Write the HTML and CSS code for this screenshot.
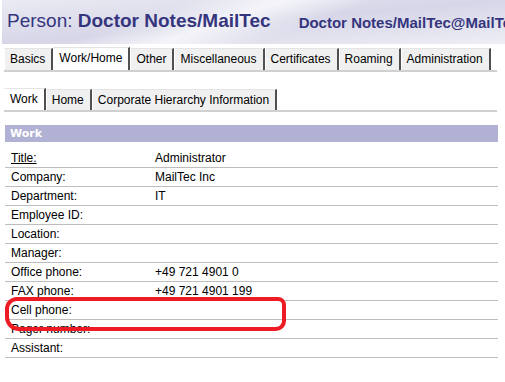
FILE: index.html
```
<!DOCTYPE html>
<html>
<head>
    <title>Person</title>
    <meta charset="utf-8" />
    <link rel="stylesheet" href="styles.css">
</head>
<body>
    <div class="header">
        <span class="title">Person: <b>Doctor Notes/MailTec</b></span>
        <span class="subtitle">Doctor Notes/MailTec@MailTec</span>
    </div>

    <div class="tabs main">
        <span class="tab">Basics</span>
        <span class="tab active">Work/Home</span>
        <span class="tab">Other</span>
        <span class="tab">Miscellaneous</span>
        <span class="tab">Certificates</span>
        <span class="tab">Roaming</span>
        <span class="tab">Administration</span>
    </div>

    <div class="tabs sub">
        <span class="tab active">Work</span>
        <span class="tab">Home</span>
        <span class="tab">Corporate Hierarchy Information</span>
    </div>

    <div class="section">
        <div class="section-head">Work</div>
        <table class="fields">
            <tr><td class="lbl"><u>Title:</u></td><td>Administrator</td></tr>
            <tr><td class="lbl">Company:</td><td>MailTec Inc</td></tr>
            <tr><td class="lbl">Department:</td><td>IT</td></tr>
            <tr><td class="lbl">Employee ID:</td><td></td></tr>
            <tr><td class="lbl">Location:</td><td></td></tr>
            <tr><td class="lbl">Manager:</td><td></td></tr>
            <tr><td class="lbl">Office phone:</td><td>+49 721 4901 0</td></tr>
            <tr><td class="lbl">FAX phone:</td><td>+49 721 4901 199</td></tr>
            <tr><td class="lbl">Cell phone:</td><td></td></tr>
            <tr><td class="lbl">Pager number:</td><td></td></tr>
            <tr><td class="lbl">Assistant:</td><td></td></tr>
        </table>
        <div class="mark"></div>
    </div>
</body>
</html>
```

FILE: styles.css
```
html, body {
    margin: 0;
    padding: 0;
}

body {
    font-family: "Liberation Sans", Arial, sans-serif;
    font-size: 12px;
    color: #000;
    background: #fff;
    width: 505px;
    overflow: hidden;
}

.header {
    margin-left: 2px;
    height: 44px;
    display: flex;
    align-items: center;
    white-space: nowrap;
    overflow: hidden;
    color: #35357d;
    background:
        linear-gradient(160deg, rgba(255,255,255,0) 30%, rgba(255,255,255,0.7) 45%, rgba(255,255,255,0) 60%),
        linear-gradient(175deg, rgba(255,255,255,0.5) 0%, rgba(255,255,255,0) 50%, rgba(255,255,255,0.6) 100%),
        #d6d6e8;
}

.title {
    font-size: 19px;
    padding-left: 5px;
    padding-bottom: 2px;
}

.subtitle {
    font-size: 15px;
    font-weight: bold;
    margin-left: 28px;
    padding-top: 1px;
}

.tabs {
    display: flex;
    align-items: flex-end;
    margin-left: 4px;
    width: 493px;
    border-bottom: 2px solid #d0d0d0;
}

.tabs.main {
    margin-top: 3px;
}

.tabs.sub {
    margin-top: 16px;
}

.tab {
    height: 21px;
    line-height: 21px;
    padding: 0 6px 0 5px;
    background: #f0f0f0;
    border-left: 1px solid #fff;
    border-right: 2px solid #505050;
    border-top: 1px solid #e4e4e4;
    white-space: nowrap;
}

.tab.active {
    background: #fff;
    height: 22px;
}

.sub .tab {
    height: 20px;
    line-height: 20px;
}

.sub .tab.active {
    height: 21px;
}

.section {
    position: relative;
    margin: 13px 0 0 5px;
    width: 493px;
}

.section-head {
    height: 17px;
    line-height: 17px;
    background: #b1b2d3;
    color: #fff;
    font-weight: bold;
    font-size: 11px;
    font-family: "DejaVu Sans", sans-serif;
    padding-left: 5px;
}

.fields {
    width: 100%;
    border-collapse: collapse;
    margin-top: 7px;
}

.fields td {
    height: 18px;
    padding: 0 0 0 6px;
    border-bottom: 1px solid #bebebe;
    vertical-align: middle;
}

.fields td.lbl {
    width: 138px;
}

.mark {
    position: absolute;
    left: 0;
    top: 172px;
    width: 273px;
    height: 26px;
    border: 4px solid #ed1c24;
    border-radius: 12px 8px 10px 14px;
}
```
